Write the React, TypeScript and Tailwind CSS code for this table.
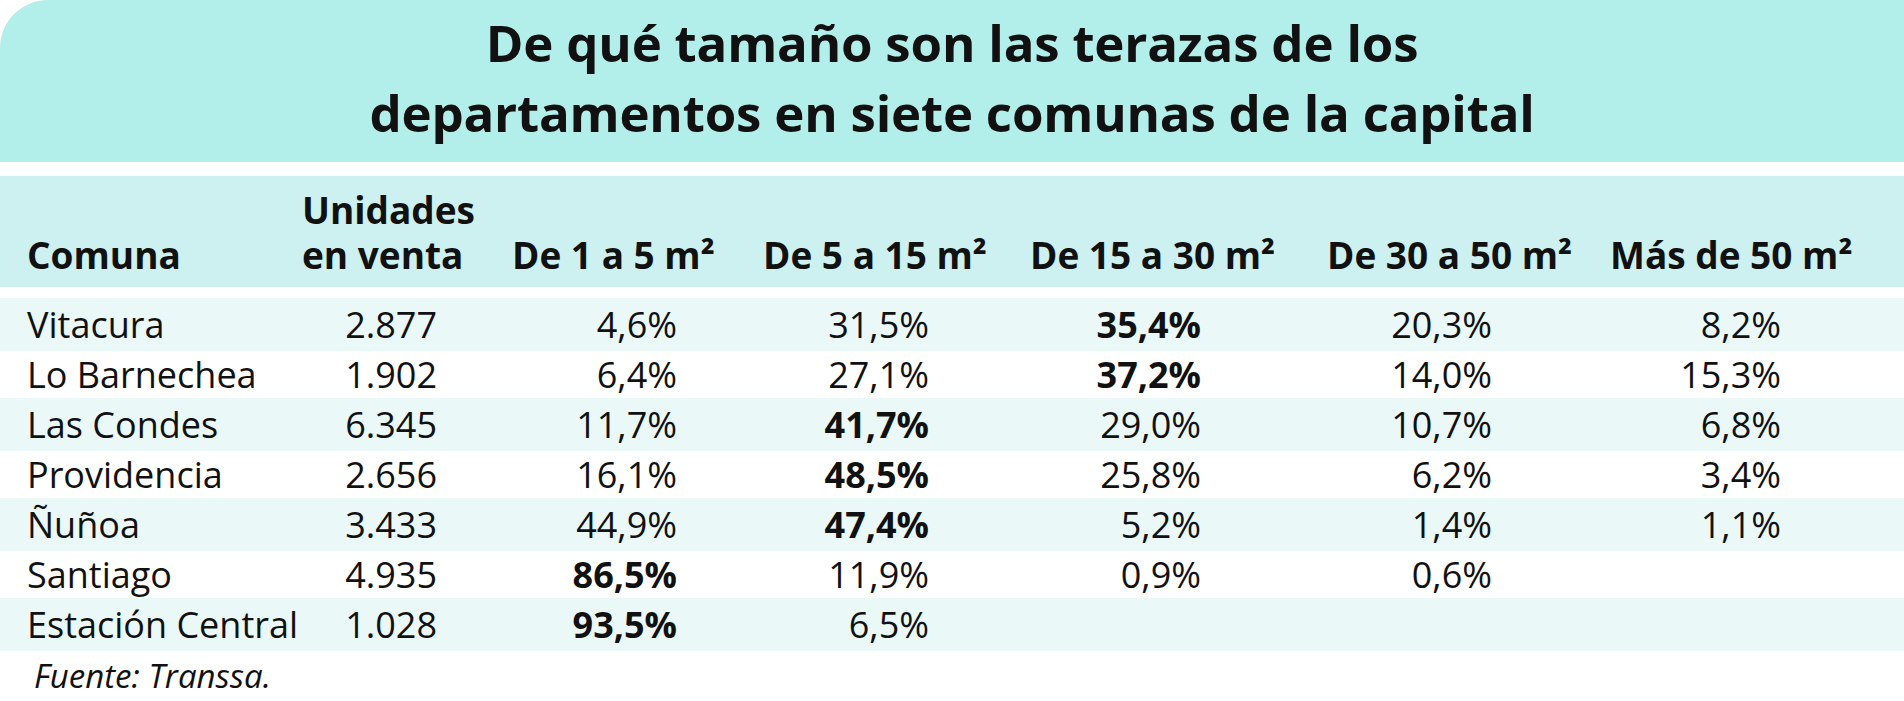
type Cell = { v: string; b?: boolean };

const HEADERS = ["De 1 a 5 m²", "De 5 a 15 m²", "De 15 a 30 m²", "De 30 a 50 m²", "Más de 50 m²"];

// right padding per numeric column, so values end where the reference puts them
const VALUE_PAD = ["pr-[75px]", "pr-[86px]", "pr-[101px]", "pr-[126px]", "pr-[118px]", "pr-[123px]"];

const ROWS: { comuna: string; units: string; cells: Cell[] }[] = [
  {
    comuna: "Vitacura",
    units: "2.877",
    cells: [{ v: "4,6%" }, { v: "31,5%" }, { v: "35,4%", b: true }, { v: "20,3%" }, { v: "8,2%" }],
  },
  {
    comuna: "Lo Barnechea",
    units: "1.902",
    cells: [{ v: "6,4%" }, { v: "27,1%" }, { v: "37,2%", b: true }, { v: "14,0%" }, { v: "15,3%" }],
  },
  {
    comuna: "Las Condes",
    units: "6.345",
    cells: [{ v: "11,7%" }, { v: "41,7%", b: true }, { v: "29,0%" }, { v: "10,7%" }, { v: "6,8%" }],
  },
  {
    comuna: "Providencia",
    units: "2.656",
    cells: [{ v: "16,1%" }, { v: "48,5%", b: true }, { v: "25,8%" }, { v: "6,2%" }, { v: "3,4%" }],
  },
  {
    comuna: "Ñuñoa",
    units: "3.433",
    cells: [{ v: "44,9%" }, { v: "47,4%", b: true }, { v: "5,2%" }, { v: "1,4%" }, { v: "1,1%" }],
  },
  {
    comuna: "Santiago",
    units: "4.935",
    cells: [{ v: "86,5%", b: true }, { v: "11,9%" }, { v: "0,9%" }, { v: "0,6%" }, { v: "" }],
  },
  {
    comuna: "Estación Central",
    units: "1.028",
    cells: [{ v: "93,5%", b: true }, { v: "6,5%" }, { v: "" }, { v: "" }, { v: "" }],
  },
];

const GRID = "grid grid-cols-[302px_210px_251px_267px_297px_283px_1fr]";

export default function App() {
  return (
    <div
      className="w-[1904px] h-[701px] overflow-hidden bg-white text-[#111]"
      style={{ fontFamily: '"Open Sans", "Noto Sans", sans-serif' }}
    >
      <header className="rounded-tl-[48px] bg-[#b2eeea] pt-[7px] pb-[15px] text-center text-[51px] font-bold leading-[70px] tracking-[-0.2px]">
        <p>De qué tamaño son las terazas de los</p>
        <p>departamentos en siete comunas de la capital</p>
      </header>

      <div className={`${GRID} mt-[14px] items-end bg-[#cdf1f0] pt-[11px] pb-[10px] text-[37px] font-bold leading-[45px]`}>
        <div className="pl-[27px]">Comuna</div>
        <div className="flex flex-col">
          <span>Unidades</span>
          <span>en venta</span>
        </div>
        {HEADERS.map((h) => (
          <div key={h} className="whitespace-nowrap">
            {h}
          </div>
        ))}
      </div>

      <div className="mt-[11px] text-[36px] leading-[44px]">
        {ROWS.map((row, i) => (
          <div
            key={row.comuna}
            className={`${GRID} items-center ${i % 2 === 0 ? "h-[53px] bg-[#eaf8f8]" : "h-[47px]"}`}
          >
            <div className="pl-[27px] whitespace-nowrap">{row.comuna}</div>
            <div className={`text-right ${VALUE_PAD[0]}`}>{row.units}</div>
            {row.cells.map((c, j) => (
              <div key={j} className={`text-right ${VALUE_PAD[j + 1]} ${c.b ? "font-bold" : ""}`}>
                {c.v}
              </div>
            ))}
          </div>
        ))}
      </div>

      <p className="flex h-[50px] items-center pl-[34px] text-[33px] italic">Fuente: Transsa.</p>
    </div>
  );
}
